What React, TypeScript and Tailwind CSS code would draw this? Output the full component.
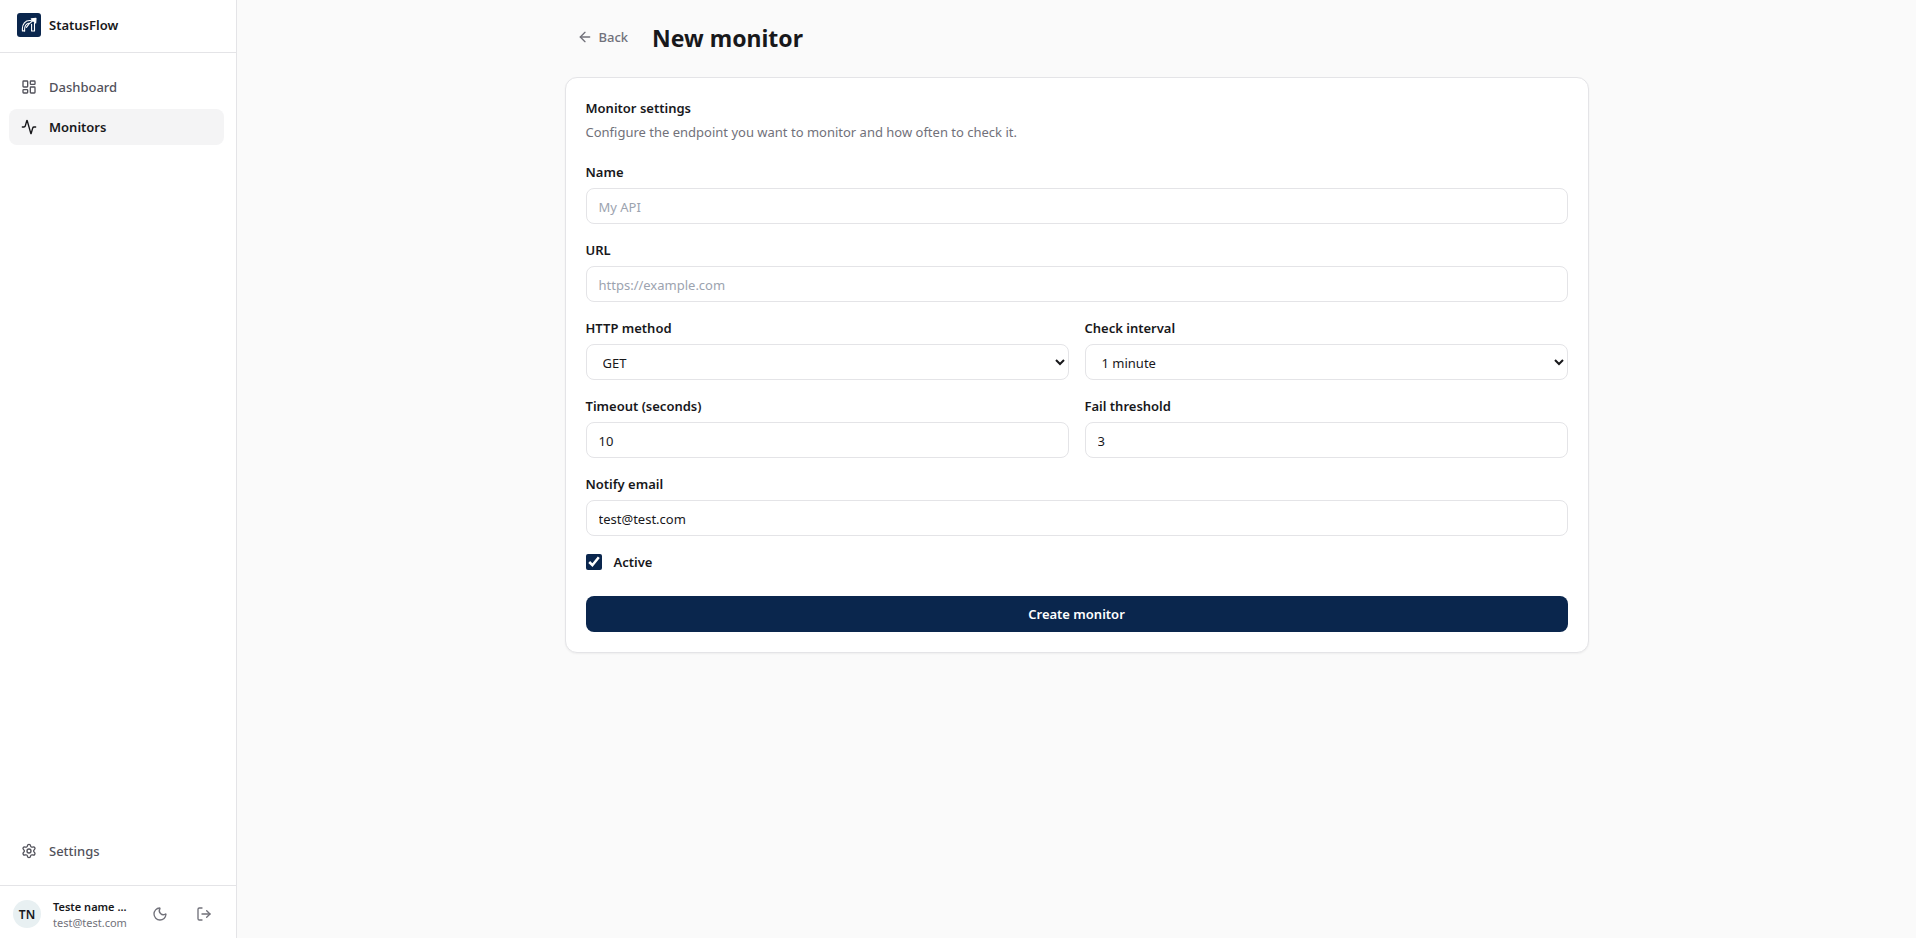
import { ReactNode, useState } from "react";
import {
  Activity,
  ArrowLeft,
  LayoutDashboard,
  LogOut,
  Moon,
  Settings,
} from "lucide-react";

const controlClass =
  "h-9 w-full rounded-lg border border-[#e4e4e7] bg-white px-3 pt-0.5 text-[13px] text-[#18181b] outline-none placeholder:text-[#9ca3af] focus:border-[#0a264d]";

type FieldProps = {
  id: string;
  label: string;
  children: ReactNode;
};

function Field({ id, label, children }: FieldProps) {
  return (
    <div className="flex flex-col gap-1.5">
      <label htmlFor={id} className="text-[13px] leading-5 font-semibold">
        {label}
      </label>
      {children}
    </div>
  );
}

type NavItemProps = {
  icon: ReactNode;
  label: string;
  active?: boolean;
};

function NavItem({ icon, label, active }: NavItemProps) {
  return (
    <a
      href="#"
      className={
        active
          ? "flex h-9 items-center gap-3 rounded-lg bg-[#f4f4f5] px-3 text-[13px] font-semibold text-[#18181b]"
          : "flex h-9 items-center gap-3 rounded-lg px-3 text-[13px] font-medium text-[#52525b]"
      }
    >
      {icon}
      <span className="pt-0.5">{label}</span>
    </a>
  );
}

function Logo() {
  return (
    <svg viewBox="0 0 24 24" className="size-6" fill="none" aria-hidden="true">
      <rect width="24" height="24" rx="3" fill="#0a264d" />
      <g stroke="#fff" strokeWidth="1.1" strokeLinecap="round" strokeLinejoin="round">
        <path d="M7.6 17.9H5.4v-2.4c0-4.6 2.9-8 7.2-8 1 0 1.8.1 2.4.3" />
        <path d="M7.6 17.9v-1.7c0-3.2 1.5-5.3 4.2-6" />
        <path d="M9.4 14.4c1.6-2.6 3.9-5 7-7.1" />
        <path d="M14.2 5.9l4.8-.5-.3 4.6z" fill="#fff" />
        <path d="M14.6 11.2v6.8h2.9v-8.2" />
      </g>
    </svg>
  );
}

function Sidebar() {
  return (
    <aside className="sticky top-0 flex h-screen w-[237px] shrink-0 flex-col border-r border-[#e4e4e7] bg-white">
      <div className="flex h-[53px] items-center gap-2 border-b border-[#e4e4e7] px-[17px] pb-0.5">
        <Logo />
        <span className="pt-0.5 text-[13px] font-semibold">StatusFlow</span>
      </div>

      <nav className="flex flex-1 flex-col gap-1 pt-4 pr-3 pb-4 pl-[9px]">
        <NavItem icon={<LayoutDashboard size={16} />} label="Dashboard" />
        <NavItem icon={<Activity size={16} />} label="Monitors" active />
        <div className="mt-auto">
          <NavItem icon={<Settings size={16} />} label="Settings" />
        </div>
      </nav>

      <div className="flex h-[53px] items-center border-t border-[#e4e4e7] pt-1 pr-4 pl-[13px]">
        <div className="flex size-7 shrink-0 items-center justify-center rounded-full bg-[#e8f0f2] pt-px text-[12px] font-semibold">
          TN
        </div>
        <div className="ml-3 w-20 pt-0.5">
          <p className="text-[11px] leading-4 font-semibold">Teste name ...</p>
          <p className="text-[11px] leading-4 text-[#71717a]">test@test.com</p>
        </div>
        <div className="ml-auto flex gap-3 text-[#71717a]">
          <button
            type="button"
            aria-label="Toggle theme"
            className="flex size-8 items-center justify-center"
          >
            <Moon size={16} />
          </button>
          <button
            type="button"
            aria-label="Log out"
            className="flex size-8 items-center justify-center"
          >
            <LogOut size={16} />
          </button>
        </div>
      </div>
    </aside>
  );
}

export default function App() {
  const [form, setForm] = useState({
    name: "",
    url: "",
    method: "GET",
    interval: "60",
    timeout: "10",
    threshold: "3",
    email: "test@test.com",
  });
  const [active, setActive] = useState(true);

  const handleChange = (
    e: React.ChangeEvent<HTMLInputElement | HTMLSelectElement>
  ) => {
    setForm({ ...form, [e.target.name]: e.target.value });
  };

  return (
    <div className="flex min-h-screen bg-[#fafafa] font-['Noto_Sans','Open_Sans',sans-serif] text-[#18181b]">
      <Sidebar />

      <main className="flex-1 pt-[21px] pb-6">
        <div className="mx-auto max-w-5xl">
          <header className="mb-6 flex items-center gap-3">
            <button
              type="button"
              className="flex h-8 items-center gap-1.5 px-3 text-[13px] font-medium text-[#71717a]"
            >
              <ArrowLeft size={16} />
              <span className="pt-0.5">Back</span>
            </button>
            <h1 className="pt-0.5 text-[23px] leading-[30px] font-bold">
              New monitor
            </h1>
          </header>

          <section className="rounded-xl border border-[#e4e4e7] bg-white p-5 shadow-xs">
            <h2 className="text-[13px] leading-5 font-semibold">
              Monitor settings
            </h2>
            <p className="mt-1 text-[13px] leading-5 text-[#71717a]">
              Configure the endpoint you want to monitor and how often to check
              it.
            </p>

            <form
              className="mt-5 flex flex-col gap-4"
              onSubmit={(e) => e.preventDefault()}
            >
              <Field id="name" label="Name">
                <input
                  id="name"
                  name="name"
                  placeholder="My API"
                  value={form.name}
                  onChange={handleChange}
                  className={controlClass}
                />
              </Field>

              <Field id="url" label="URL">
                <input
                  id="url"
                  name="url"
                  type="url"
                  placeholder="https://example.com"
                  value={form.url}
                  onChange={handleChange}
                  className={controlClass}
                />
              </Field>

              <div className="grid grid-cols-2 gap-4">
                <Field id="method" label="HTTP method">
                  <select
                    id="method"
                    name="method"
                    value={form.method}
                    onChange={handleChange}
                    className={controlClass}
                  >
                    <option value="GET">GET</option>
                    <option value="POST">POST</option>
                    <option value="HEAD">HEAD</option>
                  </select>
                </Field>

                <Field id="interval" label="Check interval">
                  <select
                    id="interval"
                    name="interval"
                    value={form.interval}
                    onChange={handleChange}
                    className={controlClass}
                  >
                    <option value="60">1 minute</option>
                    <option value="300">5 minutes</option>
                    <option value="600">10 minutes</option>
                  </select>
                </Field>

                <Field id="timeout" label="Timeout (seconds)">
                  <input
                    id="timeout"
                    name="timeout"
                    type="number"
                    value={form.timeout}
                    onChange={handleChange}
                    className={controlClass}
                  />
                </Field>

                <Field id="threshold" label="Fail threshold">
                  <input
                    id="threshold"
                    name="threshold"
                    type="number"
                    value={form.threshold}
                    onChange={handleChange}
                    className={controlClass}
                  />
                </Field>
              </div>

              <Field id="email" label="Notify email">
                <input
                  id="email"
                  name="email"
                  type="email"
                  value={form.email}
                  onChange={handleChange}
                  className={controlClass}
                />
              </Field>

              <div className="flex items-center gap-3">
                <input
                  id="active"
                  type="checkbox"
                  checked={active}
                  onChange={(e) => setActive(e.target.checked)}
                  className="size-4 accent-[#0a264d]"
                />
                <label
                  htmlFor="active"
                  className="text-[13px] leading-5 font-semibold"
                >
                  Active
                </label>
              </div>

              <button
                type="submit"
                className="mt-2 h-9 w-full rounded-lg bg-[#0a264d] pt-0.5 text-[13px] font-semibold text-white"
              >
                Create monitor
              </button>
            </form>
          </section>
        </div>
      </main>
    </div>
  );
}
